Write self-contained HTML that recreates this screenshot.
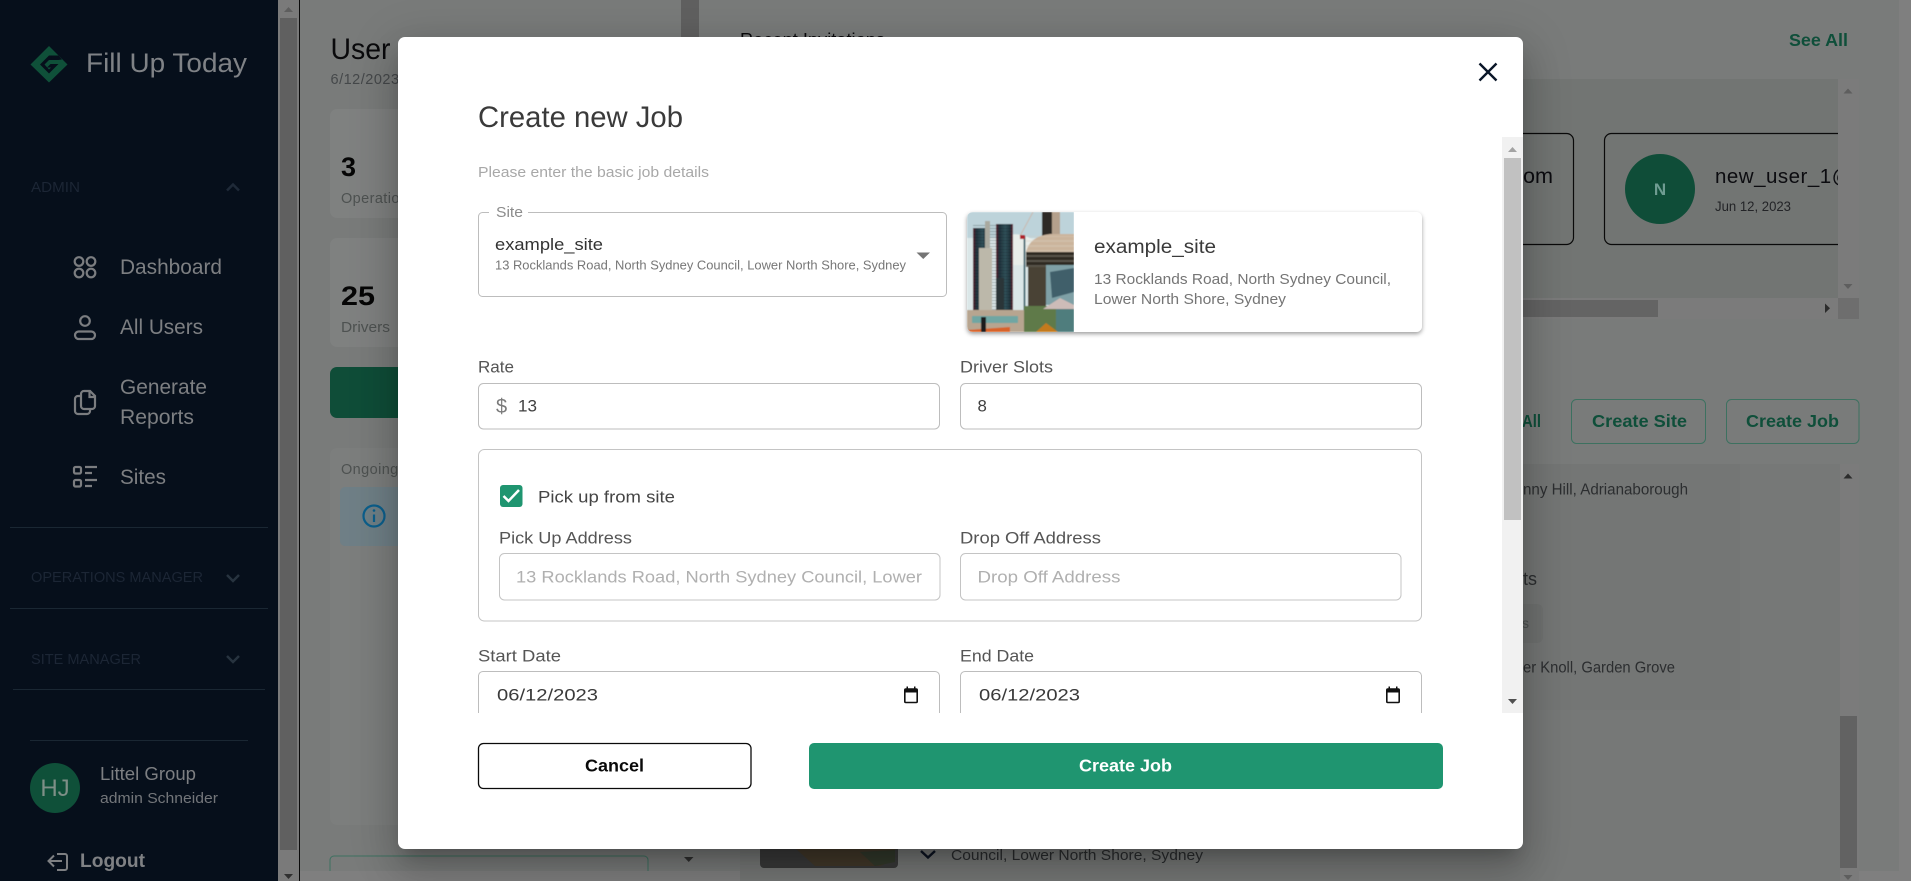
<!DOCTYPE html>
<html lang="en">
<head>
<meta charset="utf-8">
<title>Create new Job</title>
<style>
html,body{margin:0;padding:0;width:1911px;height:881px;overflow:hidden;background:#7f7f7f}
svg{position:absolute;left:0;top:0;display:block}
text{font-family:"Liberation Sans",sans-serif;white-space:pre}
.modal{position:absolute;left:398px;top:37px;width:1125px;height:812px;background:#fff;border-radius:7px;box-shadow:0 11px 15px -7px rgba(0,0,0,.2),0 24px 38px 3px rgba(0,0,0,.14),0 9px 46px 8px rgba(0,0,0,.12)}
</style>
</head>
<body>
<svg width="1911" height="881" viewBox="0 0 1911 881" xmlns="http://www.w3.org/2000/svg">
  <defs><clipPath id="cInv"><rect x="1530" y="100" width="308" height="190"/></clipPath></defs>
  <rect width="1911" height="881" fill="#7f7f7f"/>
  <rect x="299" y="0" width="1600" height="871" fill="#797b7a"/>
  <rect x="0" y="0" width="278" height="881" fill="#060f1b"/>
  <rect x="278" y="0" width="21" height="881" fill="#7a7a7a"/>
  <rect x="280" y="18" width="17" height="832" fill="#606060"/>
  <path d="M284 12l4.500-5 4.500 5z" fill="#5e5e5e"/><path d="M284 874l4.500 5 4.500-5z" fill="#303030"/>
  <rect x="299" y="0" width="1" height="881" fill="#0a0a0a"/>
  <!-- sidebar -->
  <path d="M49 46L67.500 64.500 49 82.500 30.500 64.500z" fill="#0f5039"/>
  <path d="M49 55.500L40 64.500 49 73.500 58.500 64H50.500L47 67.500H51L49 69.500 44.500 64.500 49 60 53 60 57.500 55.500z" fill="#060f1b"/>
  <path d="M51 55.500H58.500L62 59.500 58.500 60H52z" fill="#060f1b"/>
  <text x="86" y="72" font-size="27" fill="#7f8286" textLength="161" lengthAdjust="spacingAndGlyphs">Fill Up Today</text>
  <text x="31" y="192" font-size="14.500" fill="#1c2635" textLength="49" lengthAdjust="spacingAndGlyphs">ADMIN</text>
  <path d="M227 190.500l6-6 6 6" fill="none" stroke="#1f2a38" stroke-width="2.500"/>
  <g fill="none" stroke="#7b7d80" stroke-width="2.200">
    <circle cx="79" cy="261.500" r="4.300"/><circle cx="91" cy="261.500" r="4.300"/><circle cx="79" cy="273" r="4.300"/><circle cx="91" cy="273" r="4.300"/>
    <circle cx="85" cy="321" r="4.800"/><rect x="75" y="331.500" width="20" height="7.500" rx="3.700"/>
    <path d="M80 396H78A3 3 0 0 0 75 399V411A3 3 0 0 0 78 414H87A3 3 0 0 0 90 411V409"/>
    <path d="M81 394A3 3 0 0 1 84 391H90L95 396V406A3 3 0 0 1 92 409H84A3 3 0 0 1 81 406z"/><path d="M89.500 391V397H95"/>
    <rect x="74" y="467" width="7" height="6.500" rx="1.500"/><rect x="74" y="480" width="7" height="6.500" rx="1.500"/>
    <path d="M85 467H97M85 473H92M85 480H97M85 486H92"/>
  </g>
  <g fill="#7d7f82">
    <text x="120" y="274" font-size="21" textLength="102" lengthAdjust="spacingAndGlyphs">Dashboard</text>
    <text x="120" y="334" font-size="21" textLength="83" lengthAdjust="spacingAndGlyphs">All Users</text>
    <text x="120" y="394" font-size="21" textLength="87" lengthAdjust="spacingAndGlyphs">Generate</text>
    <text x="120" y="424" font-size="21" textLength="74" lengthAdjust="spacingAndGlyphs">Reports</text>
    <text x="120" y="484" font-size="21" textLength="46" lengthAdjust="spacingAndGlyphs">Sites</text>
  </g>
  <g stroke="#1a2733" stroke-width="1">
    <path d="M10 527.500H268M10 608.500H268M13 689.500H265M30 740.500H248"/>
  </g>
  <text x="31" y="582" font-size="14.500" fill="#1c2635" textLength="172" lengthAdjust="spacingAndGlyphs">OPERATIONS MANAGER</text>
  <path d="M227 575l6 6 6-6" fill="none" stroke="#27333f" stroke-width="2.500"/>
  <text x="31" y="664" font-size="14.500" fill="#1c2635" textLength="110" lengthAdjust="spacingAndGlyphs">SITE MANAGER</text>
  <path d="M227 656l6 6 6-6" fill="none" stroke="#27333f" stroke-width="2.500"/>
  <circle cx="55" cy="788" r="25" fill="#0f5039"/>
  <text x="55" y="796" font-size="24" fill="#7e8f87" text-anchor="middle">HJ</text>
  <text x="100" y="780" font-size="18" fill="#7d7f82" textLength="96" lengthAdjust="spacingAndGlyphs">Littel Group</text>
  <text x="100" y="803" font-size="15" fill="#73767a" textLength="118" lengthAdjust="spacingAndGlyphs">admin Schneider</text>
  <path d="M49 861H62M54 855.500L48.500 861 54 866.500M57 854H65A2 2 0 0 1 67 856V868A2 2 0 0 1 65 870H57" fill="none" stroke="#7d7f82" stroke-width="2"/>
  <text x="80" y="867" font-size="19" font-weight="700" fill="#7f8184" textLength="65" lengthAdjust="spacingAndGlyphs">Logout</text>
  <!-- main left column -->
  <text x="330.500" y="59" font-size="30" fill="#0a0a0c" textLength="60" lengthAdjust="spacingAndGlyphs">User</text>
  <text x="330.500" y="84" font-size="14.500" fill="#45484a" letter-spacing=".5">6/12/2023</text>
  <rect x="330" y="109" width="360" height="109" rx="7" fill="#7f8180"/>
  <text x="341" y="176" font-size="27" font-weight="700" fill="#060606">3</text>
  <text x="341" y="203" font-size="14.500" fill="#4e5251" letter-spacing=".4">Operations</text>
  <rect x="330" y="238" width="360" height="109" rx="7" fill="#7f8180"/>
  <text x="341" y="305" font-size="27" font-weight="700" fill="#060606" textLength="34" lengthAdjust="spacingAndGlyphs">25</text>
  <text x="341" y="332" font-size="14.500" fill="#4e5251" textLength="49" lengthAdjust="spacingAndGlyphs">Drivers</text>
  <rect x="330" y="367" width="360" height="51" rx="7" fill="#0f4d38"/>
  <rect x="330" y="448" width="360" height="377" rx="7" fill="#7c7e7d"/>
  <text x="341" y="474" font-size="14.500" fill="#4e5251" letter-spacing=".4">Ongoing</text>
  <rect x="340" y="487" width="345" height="59" rx="5" fill="#6f7f86"/>
  <circle cx="374" cy="516" r="10.500" fill="none" stroke="#0c5f8c" stroke-width="2.200"/>
  <path d="M374 514.500V522" stroke="#0c5f8c" stroke-width="2.200"/><circle cx="374" cy="510.500" r="1.300" fill="#0c5f8c"/>
  <path d="M330 871V860A4 4 0 0 1 334 856H644A4 4 0 0 1 648 860V871" fill="none" stroke="#3d7160" stroke-width="1"/>
  <rect x="681" y="0" width="18" height="37" fill="#606060"/>
  <path d="M684 857h9.500l-4.750 5z" fill="#303030"/>
  <!-- sites panel -->
  <rect x="740" y="464" width="1119" height="417" fill="#767877"/>
  <rect x="1200" y="464" width="540" height="246" fill="#747675"/>
  <rect x="1840" y="464" width="19" height="417" fill="#7b7b7b"/>
  <rect x="1840" y="716" width="17" height="152" fill="#626262"/>
  <path d="M1843.500 478.500l4.500-5 4.500 5z" fill="#2c2c2c"/><path d="M1843.500 875l4.500 5 4.500-5z" fill="#5e5e5e"/>
  <text x="1523" y="494.500" font-size="15.500" fill="#2c2e30" textLength="165" lengthAdjust="spacingAndGlyphs">nny Hill, Adrianaborough</text>
  <text x="1523" y="585" font-size="18" fill="#2c2e30" textLength="14" lengthAdjust="spacingAndGlyphs">ts</text>
  <rect x="1480" y="604" width="63" height="39" rx="6" fill="#6f7170"/>
  <text x="1522" y="628" font-size="14" fill="#4e5251">s</text>
  <text x="1523" y="672.500" font-size="15.500" fill="#2c2e30" textLength="152" lengthAdjust="spacingAndGlyphs">er Knoll, Garden Grove</text>
  <!-- bottom card -->
  <path d="M760 840H898V864A4 4 0 0 1 894 868H764A4 4 0 0 1 760 864z" fill="#3a3a3a"/>
  <path d="M795 848H895V860L880 866H815z" fill="#43392a"/>
  <path d="M860 852L895 850V862L875 866z" fill="#333a2c"/>
  <path d="M921 851l7 6.500 7-6.500" fill="none" stroke="#0c1422" stroke-width="2.400"/>
  <text x="951" y="860" font-size="14.700" fill="#2a2c2e" textLength="252" lengthAdjust="spacingAndGlyphs">Council, Lower North Shore, Sydney</text>
  <!-- invitations -->
  <text x="740" y="46" font-size="18" fill="#0a0a0c" textLength="145" lengthAdjust="spacingAndGlyphs">Recent Invitations</text>
  <text x="1789" y="46" font-size="17.500" font-weight="700" fill="#0f4f3a" textLength="59" lengthAdjust="spacingAndGlyphs">See All</text>
  <rect x="1200" y="79" width="659" height="240" fill="#727573"/>
  <rect x="1838" y="79" width="21" height="219" fill="#7b7b7b"/>
  <path d="M1843.500 93.500l4.500-5 4.500 5z" fill="#5e5e5e"/><path d="M1843.500 284l4.500 5 4.500-5z" fill="#5e5e5e"/>
  <rect x="1200" y="298" width="638" height="21" fill="#7b7b7b"/>
  <rect x="1200" y="300" width="458" height="17" fill="#646464"/>
  <path d="M1825 303.500l5 4.750-5 4.750z" fill="#2c2c2c"/>
  <rect x="1838" y="298" width="21" height="21" fill="#6e6e6e"/>
  <rect x="1400" y="133.500" width="173.500" height="111" rx="7" fill="none" stroke="#0a0a0a" stroke-width="1.200"/>
  <text x="1523" y="183" font-size="21" fill="#0c0c10" textLength="30" lengthAdjust="spacingAndGlyphs">om</text>
  <g clip-path="url(#cInv)">
    <rect x="1604.500" y="133.500" width="300" height="111" rx="7" fill="none" stroke="#0a0a0a" stroke-width="1.200"/>
    <text x="1715" y="183" font-size="20.500" fill="#0c0c10" letter-spacing=".5">new_user_1@example.com</text>
  </g>
  <circle cx="1660" cy="189" r="35" fill="#0f4d38"/>
  <text x="1660" y="195" font-size="17" font-weight="700" fill="#6f9c92" text-anchor="middle">N</text>
  <text x="1715" y="211" font-size="13.500" fill="#232427" textLength="76" lengthAdjust="spacingAndGlyphs">Jun 12, 2023</text>
  <!-- action row -->
  <text x="1522" y="427" font-size="17.500" font-weight="700" fill="#0f4f3a" textLength="19" lengthAdjust="spacingAndGlyphs">All</text>
  <rect x="1571.500" y="399.500" width="134" height="44" rx="5" fill="none" stroke="#3d7160"/>
  <text x="1592" y="427" font-size="17.500" font-weight="700" fill="#0f4f3a" textLength="95" lengthAdjust="spacingAndGlyphs">Create Site</text>
  <rect x="1726.500" y="399.500" width="132.500" height="44" rx="5" fill="none" stroke="#3d7160"/>
  <text x="1746" y="427" font-size="17.500" font-weight="700" fill="#0f4f3a" textLength="93" lengthAdjust="spacingAndGlyphs">Create Job</text>
</svg>

<div class="modal"></div>

<svg width="1911" height="881" viewBox="0 0 1911 881" xmlns="http://www.w3.org/2000/svg">
  <defs>
    <clipPath id="cImg"><path d="M973 212H1074V332H973A6 6 0 0 1 967 326V218A6 6 0 0 1 973 212z"/></clipPath>
    <filter id="sh" x="-5%" y="-10%" width="110%" height="125%"><feDropShadow dx="0" dy="2" stdDeviation="2" flood-color="#000" flood-opacity=".38"/></filter>
    <filter id="bl"><feGaussianBlur stdDeviation=".55"/></filter>
    <linearGradient id="twr" x1="0" x2="1" y1="0" y2="0"><stop offset="0" stop-color="#6a1f2a"/><stop offset=".18" stop-color="#1f3039"/><stop offset=".55" stop-color="#31525a"/><stop offset=".85" stop-color="#1f3039"/><stop offset="1" stop-color="#7a2330"/></linearGradient>
    <pattern id="flr" width="4" height="3" patternUnits="userSpaceOnUse"><rect width="4" height="1" fill="#0f1a20" opacity=".55"/></pattern>
    <pattern id="flr2" width="4" height="5" patternUnits="userSpaceOnUse"><rect width="4" height="2" fill="#d8cfc0" opacity=".55"/></pattern>
  </defs>
  <path d="M1479.500 63.500L1496.500 80.500M1496.500 63.500L1479.500 80.500" stroke="#0a1628" stroke-width="2.400" fill="none"/>
  <text x="478" y="127" font-size="29.500" fill="#3a3a3a" textLength="205" lengthAdjust="spacingAndGlyphs">Create new Job</text>
  <text x="478" y="177" font-size="14.700" fill="#a8a8a8" textLength="231" lengthAdjust="spacingAndGlyphs">Please enter the basic job details</text>

  <!-- site select -->
  <path d="M489 212.500H482.500A4 4 0 0 0 478.500 216.500V292.500A4 4 0 0 0 482.500 296.500H942.500A4 4 0 0 0 946.500 292.500V216.500A4 4 0 0 0 942.500 212.500H528" fill="none" stroke="#bdbdbd"/>
  <text x="496" y="217" font-size="14.700" fill="#8c8c8c" textLength="27" lengthAdjust="spacingAndGlyphs">Site</text>
  <text x="495" y="250" font-size="16.800" fill="#333" textLength="108" lengthAdjust="spacingAndGlyphs">example_site</text>
  <text x="495" y="269.500" font-size="12.600" fill="#777" textLength="411" lengthAdjust="spacingAndGlyphs">13 Rocklands Road, North Sydney Council, Lower North Shore, Sydney</text>
  <path d="M916.500 252.500H930L923.250 259z" fill="#757575"/>

  <!-- site card -->
  <rect x="967" y="212" width="455" height="120" rx="6" fill="#fff" filter="url(#sh)"/>
  <g clip-path="url(#cImg)">
    <g filter="url(#bl)">
    <rect x="967" y="212" width="107" height="120" fill="#dbe7e8"/>
    <rect x="967" y="212" width="107" height="26" fill="#bdd3da"/>
    <path d="M1000 238Q1020 228 1040 245V265H1000z" fill="#e9eeea"/>
    <rect x="973" y="228" width="17" height="84" fill="url(#twr)"/>
    <rect x="996" y="224" width="17" height="88" fill="url(#twr)"/>
    <rect x="973" y="224" width="40" height="88" fill="url(#flr)" opacity=".5"/>
    <rect x="985" y="221" width="5" height="91" fill="#a9a99f"/>
    <rect x="979" y="248" width="13" height="64" fill="#bcb8aa"/>
    <rect x="996" y="278" width="8" height="34" fill="#2a3439"/>
    <rect x="1023.500" y="236" width="2" height="75" fill="#4e6f79"/>
    <path d="M1020 236L1033 212" stroke="#c9b9ae" stroke-width="1"/>
    <rect x="1020" y="235" width="5" height="4" fill="#b0242a"/>
    <rect x="1042" y="212" width="18" height="24" fill="#2e2a26"/>
    <rect x="1052" y="212" width="8" height="24" fill="#b4a08c"/>
    <path d="M1026 252Q1030 236 1050 234H1074V252z" fill="#cbb49c"/>
    <rect x="1026" y="236" width="48" height="16" fill="url(#flr2)" opacity=".6"/>
    <rect x="1026" y="252" width="48" height="15" fill="#2f2a22"/>
    <rect x="1026" y="252" width="48" height="15" fill="url(#flr2)" opacity=".45"/>
    <rect x="1028" y="267" width="18" height="40" fill="#4a4334"/>
    <rect x="1046" y="265" width="28" height="40" fill="#7fa0a6"/>
    <path d="M1050 272L1074 268V292L1052 298z" fill="#3f5f6a"/>
    <rect x="967" y="310" width="107" height="22" fill="#b7a590"/>
    <rect x="1024" y="306" width="32" height="26" fill="#5f7a4a"/>
    <rect x="1056" y="305" width="18" height="27" fill="#4f7d7d"/>
    <path d="M1043 309L1060 298 1074 305V309z" fill="#cdbcb8"/>
    <rect x="972" y="316" width="46" height="7" fill="#6fa6a3"/>
    <path d="M967 330L1010 327V332H967z" fill="#d8632a"/>
    <rect x="981" y="317" width="5" height="15" fill="#1e1a1a"/>
    <path d="M1036 332L1046 323 1058 332z" fill="#c47a1c"/>
    </g>
  </g>
  <text x="1094" y="253" font-size="19" fill="#3a3a3a" textLength="122" lengthAdjust="spacingAndGlyphs">example_site</text>
  <text x="1094" y="284" font-size="14.700" fill="#757575" textLength="297" lengthAdjust="spacingAndGlyphs">13 Rocklands Road, North Sydney Council,</text>
  <text x="1094" y="304" font-size="14.700" fill="#757575" textLength="192" lengthAdjust="spacingAndGlyphs">Lower North Shore, Sydney</text>

  <!-- rate / slots -->
  <text x="478" y="372.500" font-size="16.800" fill="#555" textLength="36" lengthAdjust="spacingAndGlyphs">Rate</text>
  <rect x="478.500" y="383.500" width="461" height="45.500" rx="5" fill="none" stroke="#bdbdbd"/>
  <text x="496" y="413" font-size="20" fill="#7a7a7a">$</text>
  <text x="518" y="411.500" font-size="16.800" fill="#3f3f3f" textLength="19" lengthAdjust="spacingAndGlyphs">13</text>
  <text x="960" y="372.500" font-size="16.800" fill="#555" textLength="93" lengthAdjust="spacingAndGlyphs">Driver Slots</text>
  <rect x="960.500" y="383.500" width="461" height="45.500" rx="5" fill="none" stroke="#bdbdbd"/>
  <text x="977.500" y="411.500" font-size="16.800" fill="#3f3f3f">8</text>

  <!-- pick up group -->
  <rect x="478.500" y="449.500" width="943" height="171.500" rx="6" fill="none" stroke="#c4c4c4"/>
  <rect x="500" y="485" width="22.500" height="22" rx="3" fill="#1f9570"/>
  <path d="M503.500 496L508.500 501 519 490" fill="none" stroke="#fff" stroke-width="2.500"/>
  <text x="538" y="502.500" font-size="16.800" fill="#444" textLength="137" lengthAdjust="spacingAndGlyphs">Pick up from site</text>
  <text x="499" y="543.500" font-size="16.800" fill="#555" textLength="133" lengthAdjust="spacingAndGlyphs">Pick Up Address</text>
  <rect x="499.500" y="553.500" width="440.500" height="46.500" rx="5" fill="none" stroke="#c4c4c4"/>
  <text x="516" y="582.500" font-size="16.800" fill="#b0b0b0" textLength="406" lengthAdjust="spacingAndGlyphs">13 Rocklands Road, North Sydney Council, Lower</text>
  <text x="960" y="543.500" font-size="16.800" fill="#555" textLength="141" lengthAdjust="spacingAndGlyphs">Drop Off Address</text>
  <rect x="960.500" y="553.500" width="440.500" height="46.500" rx="5" fill="none" stroke="#c4c4c4"/>
  <text x="977.500" y="582.500" font-size="16.800" fill="#b0b0b0" textLength="143" lengthAdjust="spacingAndGlyphs">Drop Off Address</text>

  <!-- dates -->
  <text x="478" y="661.500" font-size="16.800" fill="#555" textLength="83" lengthAdjust="spacingAndGlyphs">Start Date</text>
  <path d="M478.500 713V675.500A4.500 4.500 0 0 1 483 671.500H935A4.500 4.500 0 0 1 939.500 675.500V713" fill="none" stroke="#bdbdbd"/>
  <text x="497" y="700.500" font-size="16.800" fill="#3a3a3a" textLength="101" lengthAdjust="spacingAndGlyphs">06/12/2023</text>
  <g fill="none" stroke="#111" stroke-width="1.600"><rect x="904.800" y="689" width="12.400" height="13.500" rx="1"/></g>
  <path d="M904.500 688.500H917.500V692.500H904.500zM906.500 686.500H908V689H906.500zM914 686.500H915.500V689H914z" fill="#111"/>
  <text x="960" y="661.500" font-size="16.800" fill="#555" textLength="74" lengthAdjust="spacingAndGlyphs">End Date</text>
  <path d="M960.500 713V675.500A4.500 4.500 0 0 1 965 671.500H1417A4.500 4.500 0 0 1 1421.500 675.500V713" fill="none" stroke="#bdbdbd"/>
  <text x="979" y="700.500" font-size="16.800" fill="#3a3a3a" textLength="101" lengthAdjust="spacingAndGlyphs">06/12/2023</text>
  <g fill="none" stroke="#111" stroke-width="1.600"><rect x="1386.800" y="689" width="12.400" height="13.500" rx="1"/></g>
  <path d="M1386.500 688.500H1399.500V692.500H1386.500zM1388.500 686.500H1390V689H1388.500zM1396 686.500H1397.500V689H1396z" fill="#111"/>

  <!-- scrollbar -->
  <rect x="1502" y="137" width="21" height="576" fill="#f1f1f1"/>
  <rect x="1504" y="158" width="17" height="362" fill="#c1c1c1"/>
  <path d="M1508 152l4.500-5 4.500 5z" fill="#a3a3a3"/>
  <path d="M1508 699l4.500 5 4.500-5z" fill="#505050"/>

  <!-- buttons -->
  <rect x="478.500" y="743.500" width="272.500" height="45" rx="5" fill="#fff" stroke="#0a0a0a" stroke-width="1.300"/>
  <text x="585" y="771.500" font-size="17.500" font-weight="700" fill="#0a0a0a" textLength="59" lengthAdjust="spacingAndGlyphs">Cancel</text>
  <rect x="809" y="743" width="634" height="46" rx="5" fill="#1f9570"/>
  <text x="1079" y="771.500" font-size="17.500" font-weight="700" fill="#fff" textLength="93" lengthAdjust="spacingAndGlyphs">Create Job</text>
</svg>
</body>
</html>
